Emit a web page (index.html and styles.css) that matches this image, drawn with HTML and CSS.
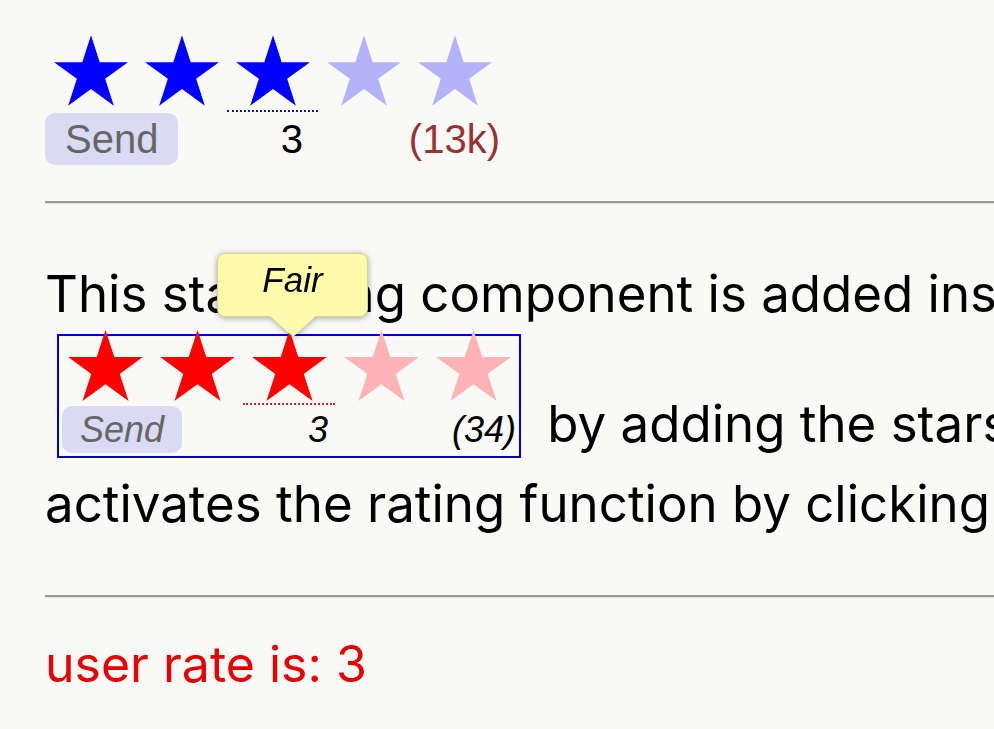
FILE: index.html
```html
<!DOCTYPE html>
<html>
<head>
    <meta charset="utf-8">
    <link rel="stylesheet" href="styles.css">
</head>
<body>

<svg class="sprite" aria-hidden="true">
    <symbol id="star" viewBox="0 0 100 95.1">
        <path d="M50 0 L61.8 36.3 L100 36.3 L69.1 58.8 L80.9 95.1 L50 72.7 L19.1 95.1 L30.9 58.8 L0 36.3 L38.2 36.3 Z"/>
    </symbol>
</svg>

<div class="rating rating-blue">
    <div class="stars">
        <span class="star"><svg><use href="#star"/></svg></span>
        <span class="star"><svg><use href="#star"/></svg></span>
        <span class="star current"><svg><use href="#star"/></svg></span>
        <span class="star off"><svg><use href="#star"/></svg></span>
        <span class="star off"><svg><use href="#star"/></svg></span>
    </div>
    <div class="meta">
        <button class="send">Send</button>
        <span class="value">3</span>
        <span class="count">(13k)</span>
    </div>
</div>

<hr>

<p class="text">This star rating component is added inside a paragraph<br><span class="rating rating-red">
        <span class="stars">
            <span class="star"><svg><use href="#star"/></svg></span>
            <span class="star"><svg><use href="#star"/></svg></span>
            <span class="star current"><svg><use href="#star"/></svg><span class="tip">Fair</span></span>
            <span class="star off"><svg><use href="#star"/></svg></span>
            <span class="star off"><svg><use href="#star"/></svg></span>
        </span>
        <span class="meta">
            <button class="send">Send</button>
            <span class="value">3</span>
            <span class="count">(34)</span>
        </span>
    </span> by adding the stars class to any span element. The user<br>activates the rating function by clicking the stars and sends the rate.</p>

<hr>

<p class="result">user rate is: 3</p>

</body>
</html>
```

FILE: styles.css
```css
html {
    overflow: hidden;
}

body {
    margin: 0;
    padding: 35px 0 0 45px;
    width: 1600px;
    background-color: #f9f9f7;
    font-family: Inter, "Noto Sans", sans-serif;
    color: #000;
}

.sprite {
    position: absolute;
    width: 0;
    height: 0;
}

/* rating widget */
.rating {
    display: inline-block;
    font-family: "Liberation Sans", Arial, sans-serif;
}

.rating .stars {
    display: flex;
}

.star {
    position: relative;
    display: flex;
    justify-content: center;
    width: 91px;
    padding-bottom: 4px;
    border-bottom: 2px dotted transparent;
}

.star svg {
    display: block;
    width: 74px;
    height: 71px;
}

.meta {
    display: grid;
    grid-template-columns: repeat(5, 91px);
    margin-top: 1px;
    font-size: 40px;
    line-height: 52px;
}

.send {
    grid-column: 1 / span 2;
    justify-self: start;
    margin: 0;
    padding: 0 20px;
    border: 0;
    border-radius: 10px;
    background-color: #dadaf5;
    color: #666;
    font: inherit;
}

.value {
    grid-column: 3;
    justify-self: end;
    padding-right: 15px;
}

.count {
    grid-column: 5;
    justify-self: end;
    color: #993333;
}

.rating-blue .star { fill: #0000ff; }
.rating-blue .star.off { fill: #b3b3fa; }
.rating-blue .star.current { border-bottom-color: #1515a0; }

/* the one sitting inside the paragraph */
.rating-red {
    margin: 0 12px;
    border: 2px solid #0000cc;
    padding-bottom: 3px;
    line-height: normal;
}

.rating-red .star {
    width: 92px;
    padding-bottom: 2px;
    fill: #ff0000;
}

.rating-red .star svg {
    width: 75px;
    height: 71px;
    margin-top: -6px;
}

.rating-red .star.off { fill: #ffb3b3; }
.rating-red .star.current { border-bottom-color: #cc2020; }

.rating-red .meta {
    grid-template-columns: repeat(5, 92px);
    font-size: 36px;
    line-height: 47px;
    font-style: italic;
}

.rating-red .send {
    margin-left: 3px;
    padding: 0 18px;
}

.rating-red .value { padding-right: 7px; }

.rating-red .count {
    padding-right: 3px;
    color: #000;
}

.tip {
    position: absolute;
    left: -26px;
    top: -83px;
    z-index: 2;
    box-sizing: border-box;
    width: 151px;
    height: 64px;
    padding-top: 6px;
    text-align: center;
    font: italic 35px/40px "Liberation Sans", Arial, sans-serif;
    color: #000;
    background-color: #fdfbab;
    border: 1px solid #d6d58e;
    border-radius: 8px;
    filter: drop-shadow(0 1px 3px rgba(0, 0, 0, 0.35));
}

.tip::after {
    content: "";
    position: absolute;
    left: 50%;
    top: 100%;
    margin-left: -23px;
    border: solid transparent;
    border-width: 21px 23px 0;
    border-top-color: #fdfbab;
}

hr {
    height: 0;
    margin: 36px 0 0;
    border: 0;
    border-top: 2px solid #999;
    border-bottom: 1px solid #e2e2e2;
}

.text {
    margin: 50px 0 51px;
    font-size: 51px;
    line-height: 80px;
    white-space: nowrap;
}

.result {
    margin: 36px 0 0;
    font-size: 50px;
    line-height: 60px;
    color: #e60000;
}
```
